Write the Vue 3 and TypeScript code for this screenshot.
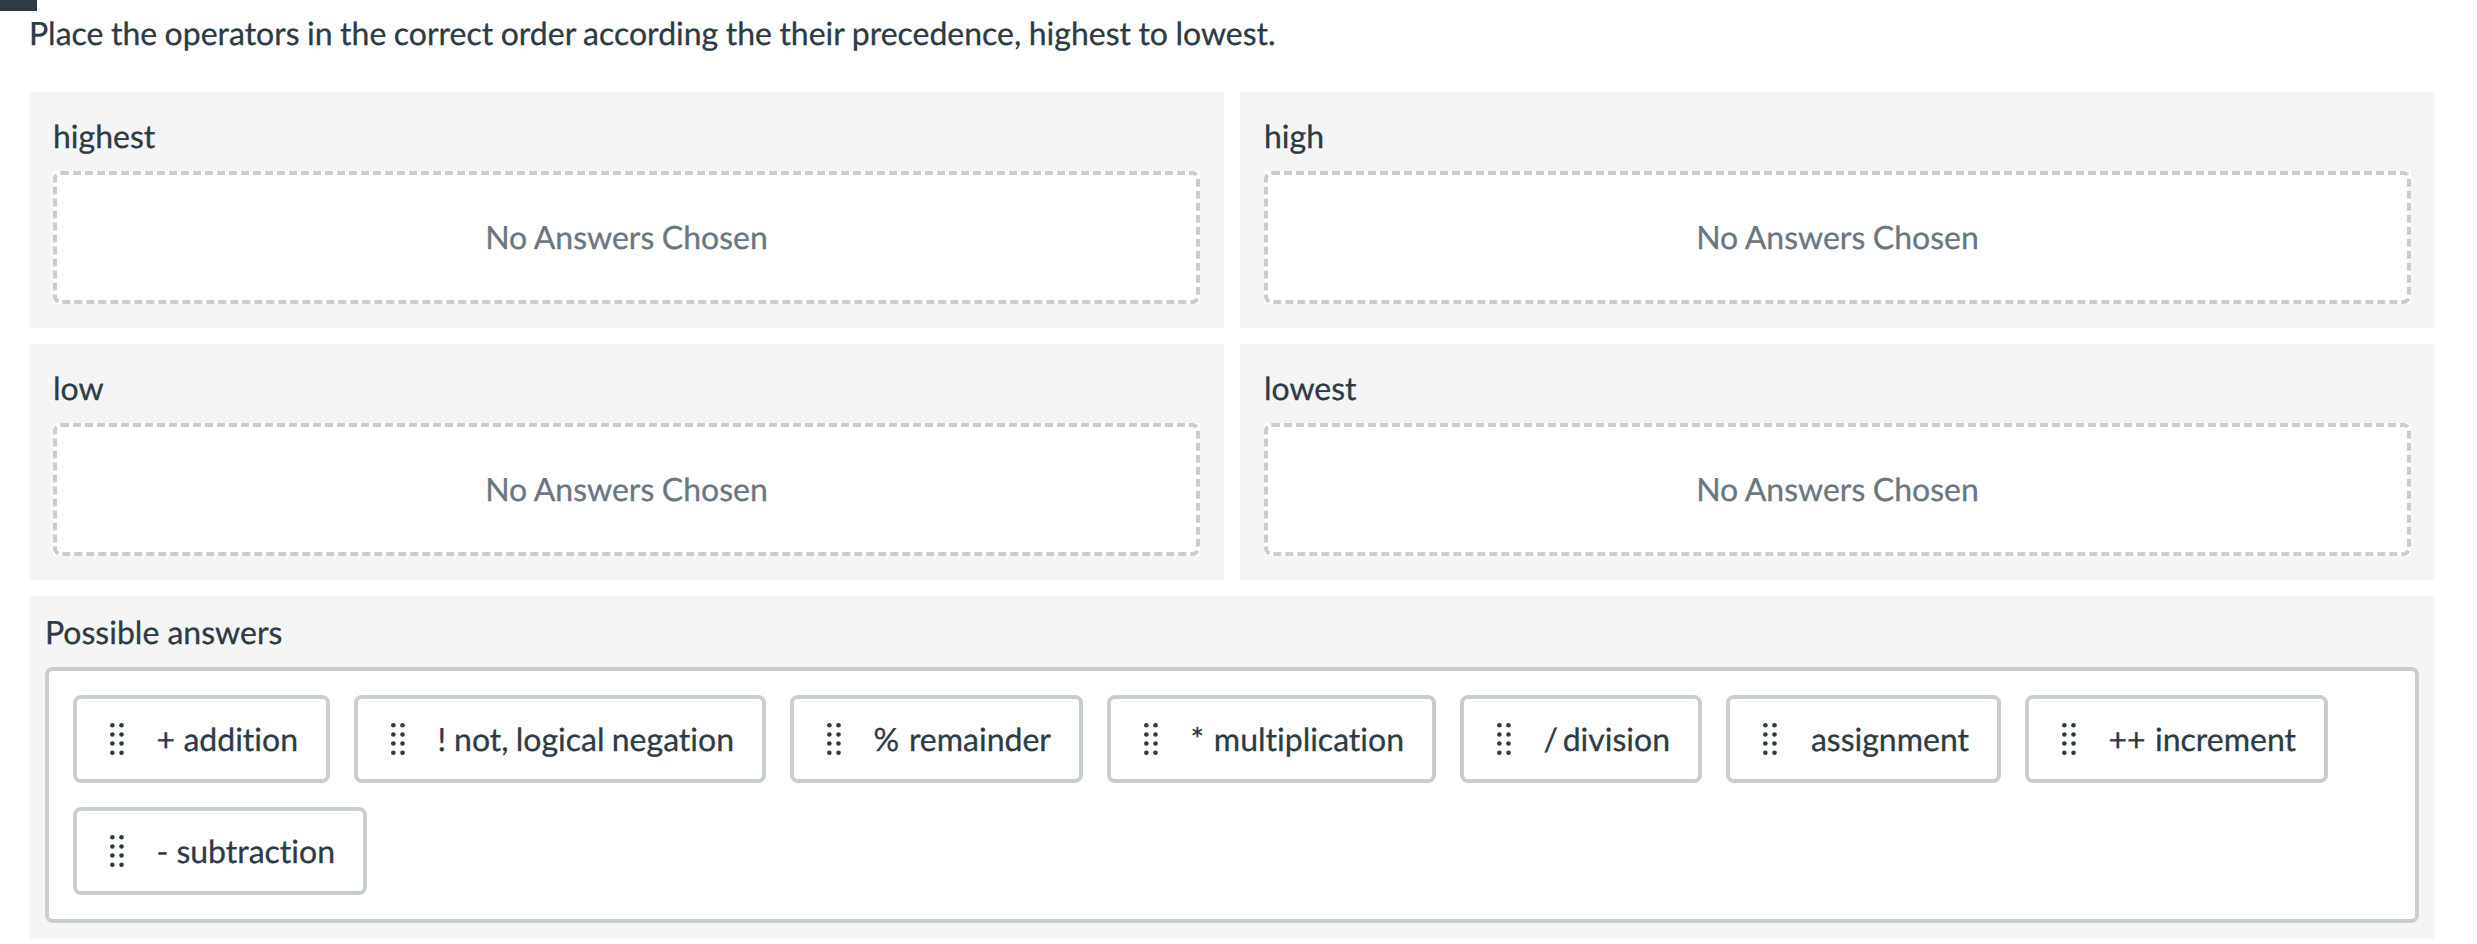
<script setup lang="ts">
interface Category {
  id: string
  title: string
}

interface Answer {
  symbol: string
  name: string
  width: number
}

const prompt =
  'Place the operators in the correct order according the their precedence, highest to lowest.'

const categories: Category[] = [
  { id: 'highest', title: 'highest' },
  { id: 'high', title: 'high' },
  { id: 'low', title: 'low' },
  { id: 'lowest', title: 'lowest' },
]

const answers: Answer[] = [
  { symbol: '+', name: 'addition', width: 257 },
  { symbol: '!', name: 'not, logical negation', width: 412 },
  { symbol: '%', name: 'remainder', width: 293 },
  { symbol: '*', name: 'multiplication', width: 329 },
  { symbol: '/', name: 'division', width: 242 },
  { symbol: '', name: 'assignment', width: 275 },
  { symbol: '++', name: 'increment', width: 303 },
  { symbol: '-', name: 'subtraction', width: 294 },
]

const dotRows = [2.3, 11.43, 20.57, 29.7]
const dotColumns = [2.35, 11.5]
</script>

<template>
  <main class="question">
    <div class="corner-tab"></div>
    <p class="prompt">{{ prompt }}</p>

    <section class="categories">
      <div v-for="category in categories" :key="category.id" class="category">
        <h2 class="category-title">{{ category.title }}</h2>
        <div class="dropzone">
          <div class="dropzone-outline">No Answers Chosen</div>
        </div>
      </div>
    </section>

    <section class="bank">
      <h2 class="bank-title">Possible answers</h2>
      <div class="bank-box">
        <div
          v-for="answer in answers"
          :key="answer.name"
          class="answer"
          :style="{ width: `${answer.width}px` }"
        >
          <svg class="handle" width="14" height="32" viewBox="0 0 14 32" aria-hidden="true">
            <template v-for="cy in dotRows" :key="cy">
              <circle v-for="cx in dotColumns" :key="cx" :cx="cx" :cy="cy" r="2.3" />
            </template>
          </svg>
          <span class="answer-text">
            <span v-if="answer.symbol">{{ answer.symbol }}</span>
            <span class="answer-name">{{ answer.name }}</span>
          </span>
        </div>
      </div>
    </section>
  </main>
</template>

<style>
body {
  margin: 0;
  background: #fff;
}
</style>

<style scoped>
.question {
  position: relative;
  box-sizing: border-box;
  height: 944px;
  padding: 9px 42px 0 29px;
  border-right: 1px solid #c7cdd1;
  overflow: hidden;
  background: #fff;
  color: #2d3b45;
  font-family: Lato, 'Liberation Sans', sans-serif;
  font-size: 32px;
  font-variant-ligatures: none;
  line-height: 48px;
  text-rendering: geometricPrecision;
  -webkit-text-stroke: 0.3px currentColor;
}

.corner-tab {
  position: absolute;
  top: 0;
  left: 0;
  width: 37px;
  height: 11px;
  background: #2d3b45;
}

.prompt {
  margin: 0 0 35px;
  white-space: nowrap;
  word-spacing: -0.73px;
}

.categories {
  display: grid;
  grid-template-columns: 1fr 1fr;
  gap: 16px;
}

.category {
  box-sizing: border-box;
  height: 236px;
  padding: 20px 24px 24px;
  background: #f5f5f5;
}

.category-title,
.bank-title {
  margin: 0;
  font-size: inherit;
  font-weight: 400;
}

.category-title {
  height: 59px;
}

.dropzone {
  background: #fff;
}

.dropzone-outline {
  display: flex;
  align-items: center;
  justify-content: center;
  box-sizing: border-box;
  height: 133px;
  padding-bottom: 2px;
  border: 4px dashed #c7cdd1;
  border-radius: 8px;
  color: #6b7780;
  word-spacing: -0.6px;
}

.bank {
  box-sizing: border-box;
  height: 343px;
  margin-top: 16px;
  padding: 12px 16px 16px;
  background: #f5f5f5;
}

.bank-title {
  height: 59px;
}

.bank-box {
  display: flex;
  flex-wrap: wrap;
  align-content: flex-start;
  gap: 24px;
  box-sizing: border-box;
  height: 256px;
  padding: 24px;
  border: 4px solid #c7cdd1;
  border-radius: 8px;
  background: #fff;
}

.answer {
  display: flex;
  align-items: center;
  box-sizing: border-box;
  height: 88px;
  padding: 0 28px 0 33px;
  border: 4px solid #c7cdd1;
  border-radius: 8px;
  background: #fff;
  white-space: nowrap;
}

.handle {
  flex: none;
  margin-right: 32.5px;
  fill: #2d3b45;
}

.answer-text {
  display: flex;
  flex: 1;
  justify-content: space-between;
}

.answer-name {
  margin-left: auto;
  word-spacing: -0.9px;
}
</style>
